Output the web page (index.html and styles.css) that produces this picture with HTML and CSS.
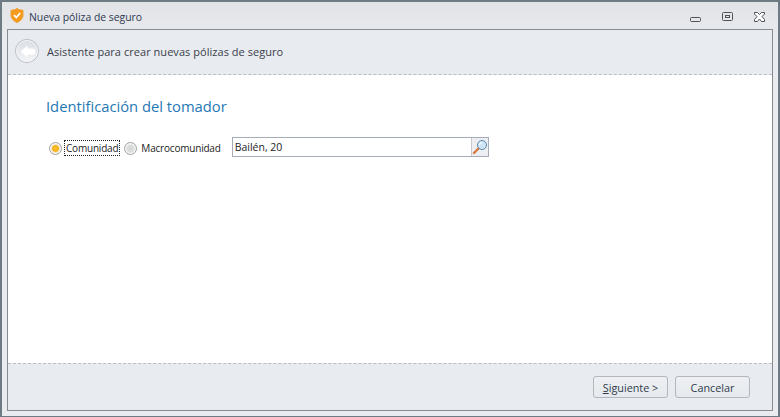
FILE: index.html
```html
<!DOCTYPE html>
<html lang="es">
<head>
    <meta charset="UTF-8">
    <title>Nueva póliza de seguro</title>
    <link rel="stylesheet" href="styles.css">
</head>
<body>

    <div class="window">
        <div class="titlebar">
            <svg class="app-icon" width="16" height="17" viewBox="0 0 16 17">
                <path d="M8 1.500 C9.500 2.500 11.500 3.200 14 3.200 V8 C14 11.500 11.500 14 8 15.500 C4.500 14 2 11.500 2 8 V3.200 C4.500 3.200 6.500 2.500 8 1.500 Z" fill="#f59a1b" stroke="#f0a035" stroke-width="1"/>
                <path d="M5 8.200 L7.300 10.500 L11.200 6" fill="none" stroke="#fff" stroke-width="1.800"/>
            </svg>
            <span class="title">Nueva póliza de seguro</span>
            <div class="win-buttons">
                <svg width="12" height="12" viewBox="0 0 12 12"><rect x="0.500" y="5.500" width="10" height="4" rx="1" fill="none" stroke="#4f5358"/></svg>
                <svg width="12" height="12" viewBox="0 0 12 12"><rect x="0.500" y="0.500" width="10" height="8" rx="1" fill="none" stroke="#4f5358"/><rect x="3.500" y="3.500" width="4" height="2" fill="none" stroke="#4f5358"/></svg>
                <svg width="12" height="12" viewBox="0 0 12 12"><path d="M0.500 0.500 H3.500 L5.500 2.500 L7.500 0.500 H10.500 V2 L8 4.500 L10.500 7.500 V9.500 H7.500 L5.500 7 L3.500 9.500 H0.500 V7.500 L3 4.500 L0.500 2 Z" fill="#fff" stroke="#4f5358"/></svg>
            </div>
        </div>

        <div class="frame">
            <div class="wizard-header">
                <svg class="back-btn" width="26" height="26" viewBox="0 0 26 26">
                    <defs>
                        <linearGradient id="backFill" x1="0" y1="0" x2="0" y2="1">
                            <stop offset="0" stop-color="#d9dde2"/>
                            <stop offset="1" stop-color="#f4f5f7"/>
                        </linearGradient>
                    </defs>
                    <circle cx="13" cy="13" r="11.500" fill="url(#backFill)" stroke="#b9bec5"/>
                    <circle cx="13" cy="13" r="10.500" fill="none" stroke="#f4f5f7"/>
                    <path d="M7 13.500 L13 8.500 V11 H19 Q21 11 21 13.500 Q21 16 19 16 H13 V18.500 Z" fill="#fff" stroke="#fff" stroke-width="1" stroke-linejoin="round"/>
                </svg>
                <span class="wizard-title">Asistente para crear nuevas pólizas de seguro</span>
            </div>

            <div class="content">
                <h2>Identificación del tomador</h2>
                <div class="form-row">
                    <span class="radio selected"></span>
                    <span class="radio-label focused">Comunidad</span>
                    <span class="radio"></span>
                    <span class="radio-label">Macrocomunidad</span>
                    <div class="search-box">
                        <span class="search-value">Bailén, 20</span>
                        <span class="search-btn">
                            <svg width="16" height="16" viewBox="0 0 16 16">
                                <path d="M2 14 L6.500 9.500" stroke="#d9793f" stroke-width="2.400" stroke-linecap="round"/>
                                <circle cx="10" cy="6" r="4.500" fill="#cfe6f7" stroke="#5d88ad"/>
                                <path d="M7.500 6 A2.500 2.500 0 0 1 10 3.500" fill="none" stroke="#fff"/>
                            </svg>
                        </span>
                    </div>
                </div>
            </div>

            <div class="wizard-footer">
                <button class="btn"><u>S</u>iguiente &gt;</button>
                <button class="btn">Cancelar</button>
            </div>
        </div>
    </div>

</body>
</html>
```

FILE: styles.css
```css
* {
    box-sizing: border-box;
}
html, body {
    margin: 0;
    height: 100%;
}
body {
    font-family: "Open Sans", "Noto Sans", sans-serif;
    font-size: 11px;
    color: #2f3a4a;
    overflow: hidden;
}
.window {
    height: 417px;
    border: 2px solid #6f7b84;
    border-bottom-width: 1px;
    background: linear-gradient(#e1e3e6, #e9ebee 40px);
    padding: 0 5px 5px 5px;
    display: flex;
    flex-direction: column;
}
.titlebar {
    height: 27px;
    flex: none;
    display: flex;
    align-items: center;
    padding-left: 2px;
}
.app-icon {
    margin-right: 4px;
}
.title {
    color: #2d3853;
    font-size: 10.400px;
    padding-top: 3px;
}
.win-buttons {
    margin-left: auto;
    display: flex;
    gap: 20px;
    padding-right: 7px;
    padding-top: 5px;
}
.frame {
    flex: 1;
    border: 1px solid #868c91;
    display: flex;
    flex-direction: column;
}
.wizard-header {
    height: 45px;
    flex: none;
    background: #e8ebef;
    border-bottom: 1px dashed #b9bdc2;
    display: flex;
    align-items: center;
    padding: 0 0 2px 6px;
}
.back-btn {
    margin-right: 7px;
}
.wizard-title {
    color: #3a3f4c;
    font-size: 11px;
    letter-spacing: 0.040px;
}
.content {
    flex: 1;
    background: #fff;
    padding: 0 38px;
}
h2 {
    margin: 20px 0 0 0;
    font-size: 14.750px;
    font-weight: 400;
    line-height: 22px;
    color: #1f78b4;
}
.form-row {
    display: flex;
    align-items: center;
    margin-top: 22px;
    margin-left: 3px;
    color: #1d1d1d;
    font-size: 10px;
    letter-spacing: -0.200px;
}
.radio {
    width: 13px;
    height: 13px;
    border-radius: 50%;
    border: 1px solid #9ea3a8;
    background: radial-gradient(circle, #d4d5d6 0, #dcdddd 45%, #f4f4f4 60%);
    flex: none;
}
.radio.selected {
    background: radial-gradient(circle, #fbc52b 0, #f6b01e 38%, #f5ead2 52%, #f4f4f4 65%);
    border-color: #a8a49a;
}
.radio-label {
    padding: 0 1px;
    margin: 0 3px 0 2px;
    border: 1px solid transparent;
}
.radio-label.focused {
    margin-right: 4px;
    border: 1px dotted #222;
}
.search-box {
    width: 257px;
    height: 20px;
    margin-left: 6px;
    border: 1px solid #a6acb5;
    display: flex;
    align-items: center;
    justify-content: space-between;
    margin-top: -2px;
    font-size: 10.500px;
    letter-spacing: 0;
}
.search-value {
    padding-left: 2px;
}
.search-btn {
    width: 17px;
    height: 18px;
    background: #eceef1;
    border-left: 1px solid #c6cad0;
    display: flex;
    align-items: center;
    justify-content: center;
}
.wizard-footer {
    height: 47px;
    flex: none;
    background: #e8ebef;
    border-top: 1px dashed #b9bdc2;
    display: flex;
    justify-content: flex-end;
    align-items: flex-start;
    gap: 7px;
    padding: 12px 22px 0 0;
}
.btn {
    width: 75px;
    height: 22px;
    font: inherit;
    font-size: 10.800px;
    color: #2f3a4a;
    background: linear-gradient(#eef0f3, #e6e9ed);
    border: 1px solid #b2b7bd;
    border-radius: 3px;
    padding: 0;
}
```
